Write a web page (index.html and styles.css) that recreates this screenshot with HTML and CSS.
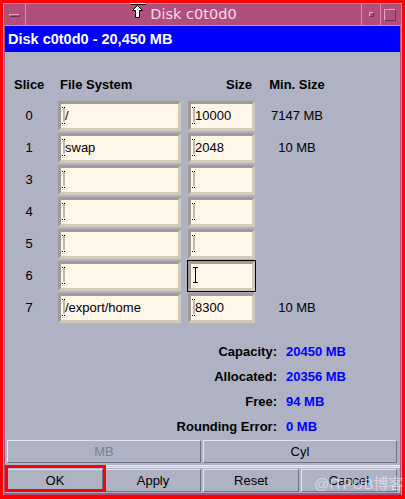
FILE: index.html
```html
<!DOCTYPE html>
<html>
<head>
<meta charset="utf-8">
<title>Disk c0t0d0</title>
<link rel="stylesheet" href="styles.css">
</head>
<body>
<div class="window">
  <div class="titlebar">
    <div class="tb-btn menu-btn"><span class="menu-bar"></span></div>
    <div class="title">Disk c0t0d0</div>
    <div class="tb-btn min-btn"><span class="min-dot"></span></div>
    <div class="tb-btn max-btn"><span class="max-box"></span></div>
  </div>
  <div class="client">
    <div class="banner">Disk c0t0d0 - 20,450 MB</div>
    <div class="panel">
      <div class="table">
        <div class="h h-slice">Slice</div>
        <div class="h h-fs">File System</div>
        <div class="h h-size">Size</div>
        <div class="h h-min">Min. Size</div>

        <div class="num">0</div>
        <div class="field fs"><svg class="caret" width="4" height="17" viewBox="0 0 4 17"><path d="M0 0.5h4M2 1.5v14M0 16.5h4"/></svg>/</div>
        <div class="field sz"><svg class="caret" width="4" height="17" viewBox="0 0 4 17"><path d="M0 0.5h4M2 1.5v14M0 16.5h4"/></svg>10000</div>
        <div class="min">7147 MB</div>

        <div class="num">1</div>
        <div class="field fs"><svg class="caret" width="4" height="17" viewBox="0 0 4 17"><path d="M0 0.5h4M2 1.5v14M0 16.5h4"/></svg>swap</div>
        <div class="field sz"><svg class="caret" width="4" height="17" viewBox="0 0 4 17"><path d="M0 0.5h4M2 1.5v14M0 16.5h4"/></svg>2048</div>
        <div class="min">10 MB</div>

        <div class="num">3</div>
        <div class="field fs"><svg class="caret" width="4" height="17" viewBox="0 0 4 17"><path d="M0 0.5h4M2 1.5v14M0 16.5h4"/></svg></div>
        <div class="field sz"><svg class="caret" width="4" height="17" viewBox="0 0 4 17"><path d="M0 0.5h4M2 1.5v14M0 16.5h4"/></svg></div>
        <div class="min"></div>

        <div class="num">4</div>
        <div class="field fs"><svg class="caret" width="4" height="17" viewBox="0 0 4 17"><path d="M0 0.5h4M2 1.5v14M0 16.5h4"/></svg></div>
        <div class="field sz"><svg class="caret" width="4" height="17" viewBox="0 0 4 17"><path d="M0 0.5h4M2 1.5v14M0 16.5h4"/></svg></div>
        <div class="min"></div>

        <div class="num">5</div>
        <div class="field fs"><svg class="caret" width="4" height="17" viewBox="0 0 4 17"><path d="M0 0.5h4M2 1.5v14M0 16.5h4"/></svg></div>
        <div class="field sz"><svg class="caret" width="4" height="17" viewBox="0 0 4 17"><path d="M0 0.5h4M2 1.5v14M0 16.5h4"/></svg></div>
        <div class="min"></div>

        <div class="num">6</div>
        <div class="field fs"><svg class="caret" width="4" height="17" viewBox="0 0 4 17"><path d="M0 0.5h4M2 1.5v14M0 16.5h4"/></svg></div>
        <div class="field sz focus"><svg class="caret-solid" width="5" height="16" viewBox="0 0 5 16"><path d="M0 0.5h5M2.5 1v14M0 15.5h5"/></svg></div>
        <div class="min"></div>

        <div class="num">7</div>
        <div class="field fs"><svg class="caret" width="4" height="17" viewBox="0 0 4 17"><path d="M0 0.5h4M2 1.5v14M0 16.5h4"/></svg>/export/home</div>
        <div class="field sz"><svg class="caret" width="4" height="17" viewBox="0 0 4 17"><path d="M0 0.5h4M2 1.5v14M0 16.5h4"/></svg>8300</div>
        <div class="min">10 MB</div>
      </div>

      <div class="summary">
        <div class="label">Capacity:</div><div class="value">20450 MB</div>
        <div class="label">Allocated:</div><div class="value">20356 MB</div>
        <div class="label">Free:</div><div class="value">94 MB</div>
        <div class="label">Rounding Error:</div><div class="value">0 MB</div>
      </div>

      <div class="btnrow units">
        <div class="btn disabled">MB</div>
        <div class="btn">Cyl</div>
      </div>
      <div class="sep"></div>
      <div class="btnrow actions">
        <div class="btn">OK</div>
        <div class="btn">Apply</div>
        <div class="btn">Reset</div>
        <div class="btn">Cancel</div>
      </div>
    </div>
  </div>
</div>

<svg class="pointer" width="18" height="19" viewBox="129 0 18 19">
  <path d="M130.5 3.5h15" stroke="#fff" stroke-width="1"/>
  <path d="M130.5 4.5h15" stroke="#000" stroke-width="1"/>
  <path d="M137.5 5.5L132.5 10.5H135.5V17.5H139.5V10.5H142.5Z" fill="#fff" stroke="#000" stroke-width="1"/>
</svg>
<div class="highlight"></div>
<div class="watermark">@ITPUB博客</div>
</body>
</html>
```

FILE: styles.css
```css
* { box-sizing: border-box; }

html, body {
  margin: 0;
  padding: 0;
}

body {
  width: 405px;
  height: 499px;
  background: #ff0000;
  overflow: hidden;
  position: relative;
  font-family: "Liberation Sans", Arial, sans-serif;
  font-size: 13px;
  color: #000;
}

.window {
  margin: 3px 3px 0 3px;
  height: 492px;
  background: #b0507a;
  border-left: 1px solid #d68cab;
  border-right: 1px solid #d68cab;
  display: flex;
  flex-direction: column;
}

/* title bar */
.titlebar {
  height: 23px;
  display: flex;
  border-top: 1px solid #d68cab;
  border-bottom: 1px solid #d68cab;
}

.tb-btn {
  display: flex;
  align-items: center;
  justify-content: center;
}

.menu-btn {
  width: 22px;
  border-right: 1px solid #d68cab;
}

.menu-bar {
  width: 11px;
  height: 3px;
  margin-top: 1px;
  background: #b0507a;
  border-top: 1px solid #e2a6be;
  border-left: 1px solid #e2a6be;
  border-bottom: 1px solid #70304c;
  border-right: 1px solid #70304c;
}

.title {
  flex: 1;
  text-align: center;
  font-family: "DejaVu Sans", sans-serif;
  font-size: 14.5px;
  line-height: 21px;
  color: #f6dde8;
}

.min-btn {
  width: 19px;
  border-left: 1px solid #d68cab;
}

.min-dot {
  width: 5px;
  height: 5px;
  background: #b0507a;
  border-top: 1px solid #e2a6be;
  border-left: 1px solid #e2a6be;
  border-bottom: 1px solid #70304c;
  border-right: 1px solid #70304c;
}

.max-btn {
  width: 21px;
  border-left: 1px solid #d68cab;
}

.max-box {
  width: 12px;
  height: 12px;
  margin-right: 2px;
  border-top: 1px solid #e2a6be;
  border-left: 1px solid #e2a6be;
  border-bottom: 1px solid #70304c;
  border-right: 1px solid #70304c;
}

/* client */
.client {
  flex: 1;
  margin: 0 1px 2px 1px;
  display: flex;
  flex-direction: column;
}

.banner {
  height: 26px;
  background: #0000ff;
  color: #fff;
  font-weight: bold;
  font-size: 14.5px;
  line-height: 26px;
  padding-left: 3px;
  white-space: nowrap;
}

.panel {
  flex: 1;
  background: #aeb2c3;
  padding-top: 24px;
  display: flex;
  flex-direction: column;
}

/* slice table */
.table {
  display: grid;
  grid-template-columns: 48px 135px 67px 84px;
  grid-template-rows: 23px repeat(7, 30px);
  row-gap: 2px;
}

.h {
  font-weight: bold;
  font-size: 13px;
  line-height: 17px;
  align-self: start;
  white-space: nowrap;
}

.h-slice { padding-left: 9px; }
.h-fs { padding-left: 7px; }
.h-size { text-align: right; padding-right: 3px; }
.h-min { text-align: center; }

.num {
  text-align: center;
  line-height: 30px;
}

.field {
  position: relative;
  height: 30px;
  background: #fff6ea;
  border: 3px solid;
  border-color: #a09b93 #d1c9ba #d1c9ba #a09b93;
  padding-left: 4px;
  line-height: 24px;
  white-space: nowrap;
  overflow: hidden;
}

.fs {
  margin-left: 5px;
  width: 123px;
}

.sz {
  width: 67px;
}

.focus {
  outline: 1px solid #000;
}

.caret {
  position: absolute;
  left: 1px;
  top: 3px;
}

.caret path {
  stroke: #000;
  stroke-width: 1;
  stroke-dasharray: 1 1;
  fill: none;
}

.caret-solid {
  position: absolute;
  left: 2px;
  top: 3px;
}

.caret-solid path {
  stroke: #000;
  stroke-width: 1;
  fill: none;
}

.min {
  text-align: center;
  line-height: 30px;
  white-space: nowrap;
}

/* summary */
.summary {
  margin-top: 16px;
  display: grid;
  grid-template-columns: 272px auto;
  column-gap: 9px;
  grid-auto-rows: 25px;
  align-items: center;
  font-weight: bold;
  font-size: 13px;
}

.label {
  text-align: right;
  white-space: nowrap;
}

.value {
  color: #0000ff;
  white-space: nowrap;
}

/* buttons */
.btnrow {
  display: grid;
  column-gap: 2px;
  padding-left: 2px;
  height: 23px;
}

.units {
  margin-top: 1px;
  grid-template-columns: 194px 194px;
}

.actions {
  grid-template-columns: 96px 96px 96px 96px;
}

.btn {
  height: 23px;
  border: 1px solid;
  border-color: #e2e4ec #6f7286 #6f7286 #e2e4ec;
  background: #aeb2c3;
  text-align: center;
  line-height: 21px;
  font-size: 13px;
}

.btn.disabled {
  color: #7f8296;
}

.sep {
  margin: 2px 0 1px 0;
  height: 3px;
  border-top: 1px solid #eceef4;
  border-bottom: 1px solid #eceef4;
  background: #c6c9d5;
}

/* overlays */
.pointer {
  position: absolute;
  left: 129px;
  top: 0;
}

.highlight {
  position: absolute;
  left: 5px;
  top: 465px;
  width: 101px;
  height: 27px;
  border: 3px solid #ff0000;
}

.watermark {
  position: absolute;
  left: 314px;
  top: 476px;
  font-family: "Liberation Sans", "Noto Sans CJK SC", sans-serif;
  font-size: 15px;
  line-height: 16px;
  color: rgba(236, 238, 244, 0.65);
  white-space: nowrap;
}
```
